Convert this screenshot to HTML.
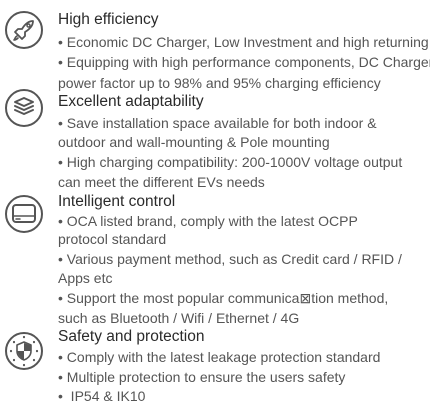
<!DOCTYPE html><html><head><style>
body{margin:0;width:430px;height:413px;background:#fff;overflow:hidden;position:relative;font-family:"Liberation Sans",Arial,sans-serif}
.l{position:absolute;left:58px;white-space:nowrap;font-size:14px;color:#555;line-height:20px}
.t{font-size:15.5px;color:#2a2a2a}
svg{position:absolute}
</style></head><body>
<svg width="430" height="413" style="left:0;top:0" fill="none" stroke="#555" stroke-width="2" stroke-linecap="round" stroke-linejoin="round">
<circle cx="24" cy="30" r="18"/>
<path d="M19 36 L15 32 L18 29 L22 29 C25 24 29 21 33 21 C33 25 30 29 25 32 L25 36 L22 39 Z" stroke-width="1.8"/>
<circle cx="28.5" cy="25.5" r="1.5" stroke-width="1.5"/>
<path d="M17 36 C15 37 15 39 14 40 C16 40 17 39 18 38" stroke-width="1.6"/>
<circle cx="24" cy="108" r="18"/>
<path d="M24 98 L33 102 L24 106 L15 102 Z M15 106 L24 110 L33 106 M15 110 L24 114 L33 110"/>
<circle cx="24" cy="214" r="18"/>
<rect x="13" y="205" width="22" height="17" rx="3"/>
<path d="M13 216 H35 M16 219 H20" stroke-width="1.5"/>
<circle cx="24" cy="351" r="18"/>
<path d="M24 342 L31 345 V351 C31 356 27 359 24 360 C21 359 17 356 17 351 V345 Z" stroke-width="1.6"/>
<path d="M24 343 L31 345.5 V351 H24 Z M24 351 H17.3 C18 355 21 358.5 24 359.5 Z" fill="#555" stroke="none"/>
<path d="M24 337v.1 M14 342v.1 M34 342v.1 M11 351v.1 M37 351v.1 M14 360v.1 M34 360v.1 M24 365v.1" stroke-width="2.2"/>
</svg>
<div class="l t" style="top:10px">High efficiency</div>
<div class="l" style="top:32px">• Economic DC Charger, Low Investment and high returning</div>
<div class="l" style="top:52px">• Equipping with high performance components, DC Charger</div>
<div class="l" style="top:73px">power factor up to 98% and 95% charging efficiency</div>
<div class="l t" style="top:92px">Excellent adaptability</div>
<div class="l" style="top:113px">• Save installation space available for both indoor &amp;</div>
<div class="l" style="top:132px">outdoor and wall-mounting &amp; Pole mounting</div>
<div class="l" style="top:152px">• High charging compatibility: 200-1000V voltage output</div>
<div class="l" style="top:172px">can meet the different EVs needs</div>
<div class="l t" style="top:192px">Intelligent control</div>
<div class="l" style="top:211px">• OCA listed brand, comply with the latest OCPP</div>
<div class="l" style="top:229px">protocol standard</div>
<div class="l" style="top:249px">• Various payment method, such as Credit card / RFID /</div>
<div class="l" style="top:268px">Apps etc</div>
<div class="l" style="top:288px">• Support the most popular communica⊠tion method,</div>
<div class="l" style="top:308px">such as Bluetooth / Wifi / Ethernet / 4G</div>
<div class="l t" style="top:327px">Safety and protection</div>
<div class="l" style="top:347px">• Comply with the latest leakage protection standard</div>
<div class="l" style="top:367px">• Multiple protection to ensure the users safety</div>
<div class="l" style="top:386px">•&nbsp; IP54 &amp; IK10</div>
</body></html>
